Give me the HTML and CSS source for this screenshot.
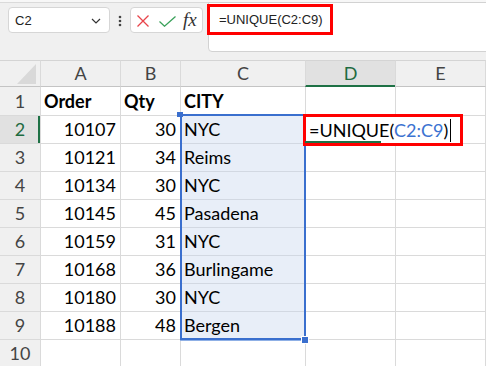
FILE: index.html
```html
<!DOCTYPE html>
<html>
<head>
<meta charset="utf-8">
<link rel="stylesheet" href="styles.css">
</head>
<body>
<div class="app">
  <div class="toolbar">
    <div class="namebox">
      <span>C2</span>
      <svg class="chev" width="10" height="6" viewBox="0 0 10 6"><path d="M1 1 L5 5 L9 1" fill="none" stroke="#333" stroke-width="1.2"/></svg>
    </div>
    <div class="grip">
      <svg width="4" height="12" viewBox="0 0 4 12"><circle cx="2" cy="2" r="1.3" fill="#444"/><circle cx="2" cy="6" r="1.3" fill="#444"/><circle cx="2" cy="10" r="1.3" fill="#444"/></svg>
    </div>
    <div class="fxbox">
      <svg class="ic-x" width="12" height="12" viewBox="0 0 12 12"><path d="M0.5 0.5 L11.5 11.5 M11.5 0.5 L0.5 11.5" stroke="#e8444a" stroke-width="1.3" fill="none"/></svg>
      <svg class="ic-ok" width="17" height="11" viewBox="0 0 17 11"><path d="M0.5 5.5 L5.5 10.2 L16.5 0.5" stroke="#3aa15a" stroke-width="1.3" fill="none"/></svg>
      <span class="fx">fx</span>
    </div>
    <div class="formula">
      <span class="ftext">=UNIQUE(C2:C9)</span>
      <div class="mark mark-bar"></div>
    </div>
  </div>

  <div class="sheet">
    <div class="c hd corner"><div class="tri"></div></div>
    <div class="c hd">A</div>
    <div class="c hd">B</div>
    <div class="c hd">C</div>
    <div class="c hd act-col">D</div>
    <div class="c hd">E</div>
    <div class="c hd"></div>

    <div class="c rh first">1</div>
    <div class="c first b">Order</div>
    <div class="c first b">Qty</div>
    <div class="c first b">CITY</div>
    <div class="c first"></div>
    <div class="c first"></div>
    <div class="c first"></div>

    <div class="c rh act-row">2</div>
    <div class="c n">10107</div>
    <div class="c n">30</div>
    <div class="c sel">NYC</div>
    <div class="c"></div>
    <div class="c"></div>
    <div class="c"></div>

    <div class="c rh">3</div>
    <div class="c n">10121</div>
    <div class="c n">34</div>
    <div class="c sel">Reims</div>
    <div class="c"></div>
    <div class="c"></div>
    <div class="c"></div>

    <div class="c rh">4</div>
    <div class="c n">10134</div>
    <div class="c n">30</div>
    <div class="c sel">NYC</div>
    <div class="c"></div>
    <div class="c"></div>
    <div class="c"></div>

    <div class="c rh">5</div>
    <div class="c n">10145</div>
    <div class="c n">45</div>
    <div class="c sel">Pasadena</div>
    <div class="c"></div>
    <div class="c"></div>
    <div class="c"></div>

    <div class="c rh">6</div>
    <div class="c n">10159</div>
    <div class="c n">31</div>
    <div class="c sel">NYC</div>
    <div class="c"></div>
    <div class="c"></div>
    <div class="c"></div>

    <div class="c rh">7</div>
    <div class="c n">10168</div>
    <div class="c n">36</div>
    <div class="c sel">Burlingame</div>
    <div class="c"></div>
    <div class="c"></div>
    <div class="c"></div>

    <div class="c rh">8</div>
    <div class="c n">10180</div>
    <div class="c n">30</div>
    <div class="c sel">NYC</div>
    <div class="c"></div>
    <div class="c"></div>
    <div class="c"></div>

    <div class="c rh">9</div>
    <div class="c n">10188</div>
    <div class="c n">48</div>
    <div class="c sel">Bergen</div>
    <div class="c"></div>
    <div class="c"></div>
    <div class="c"></div>

    <div class="c rh">10</div>
    <div class="c"></div>
    <div class="c"></div>
    <div class="c"></div>
    <div class="c"></div>
    <div class="c"></div>
    <div class="c"></div>

    <div class="range"></div>
    <div class="handle-tl"></div>
    <div class="handle-br"></div>
    <div class="edit">
      <span class="etext">=UNIQUE(<span class="ref">C2:C9</span>)</span><span class="caret"></span>
      <div class="active-line"></div>
    </div>
  </div>
</div>
</body>
</html>
```

FILE: styles.css
```css
html, body {
  margin: 0;
  padding: 0;
  background: #ffffff;
}

.app {
  width: 486px;
  height: 366px;
  overflow: hidden;
  font-family: "Liberation Sans", Arial, sans-serif;
}

/* ---------- toolbar ---------- */
.toolbar {
  height: 60px;
  display: flex;
  align-items: flex-start;
  background: linear-gradient(#f7f7f7 0 2px, #dadada 2px 3px, #f0f0f0 3px);
}

.namebox {
  margin: 7px 0 0 8px;
  width: 102px;
  height: 26px;
  box-sizing: border-box;
  background: #fff;
  border: 1px solid #d6d6d6;
  border-radius: 4px;
  display: flex;
  align-items: center;
  justify-content: space-between;
  padding: 0 8px 0 6px;
  font-size: 13px;
  color: #222;
}

.chev { margin-top: 1px; }

.grip {
  width: 20px;
  display: flex;
  justify-content: center;
  margin-top: 15px;
}

.fxbox {
  margin-top: 7px;
  width: 73px;
  height: 26px;
  box-sizing: border-box;
  background: #fff;
  border: 1px solid #d6d6d6;
  border-radius: 4px;
  display: flex;
  align-items: center;
  padding-left: 6px;
}

.ic-x { margin-top: 1px; }
.ic-ok { margin-left: 10px; margin-top: 2px; }

.fx {
  margin-left: 7px;
  font-family: "Liberation Serif", "DejaVu Serif", serif;
  font-style: italic;
  font-size: 19px;
  color: #333;
  line-height: 20px;
}

.formula {
  position: relative;
  flex: 1;
  margin: 2px -2px 0 5px;
  height: 50px;
  box-sizing: border-box;
  background: #fff;
  border: 1px solid #d2d2d2;
  border-radius: 0 0 0 4px;
  padding: 9px 0 0 10px;
  font-size: 13px;
  line-height: 16px;
  color: #222;
}

.mark {
  position: absolute;
  border: 3px solid #ff0000;
  box-sizing: border-box;
}

.mark-bar {
  left: -2px;
  top: 1px;
  width: 126px;
  height: 31px;
}

/* ---------- sheet ---------- */
.sheet {
  position: relative;
  display: grid;
  grid-template-columns: 40px 80px 60px 125px 90px 90px 20px;
  grid-template-rows: 27px repeat(10, 28px);
  font-family: "Lato", "Liberation Sans", sans-serif;
  font-size: 18px;
  color: #000;
}

.c {
  box-sizing: border-box;
  border-left: 1px solid #dadada;
  border-top: 1px solid #dadada;
  padding: 0 3px;
  line-height: 27px;
  white-space: nowrap;
  overflow: hidden;
}

.c.first { border-top: none; line-height: 28px; }

.b { font-weight: bold; }
.n { text-align: right; padding-right: 4px; }
.sel { background: #e8eef8; border-top-color: #d2d8e2; }

.hd {
  background: #f0f0f0;
  text-align: center;
  color: #444;
  border-top-color: #d4d4d4;
  border-bottom: 1px solid #c4c4c4;
  line-height: 25px;
}

.corner {
  border-left: none;
  display: flex;
  align-items: flex-end;
  justify-content: flex-end;
  padding: 0 4px 2px 0;
}

.tri {
  width: 19px;
  height: 20px;
  background: #d9d9d9;
  clip-path: polygon(100% 0, 100% 100%, 0 100%);
}

.rh {
  background: #f0f0f0;
  border-left: none;
  text-align: center;
  color: #444;
  padding: 0;
}

.act-col {
  background: #e1e1e1;
  color: #1e6b41;
  border-bottom: 2px solid #1e7145;
  line-height: 24px;
}

.act-row {
  background: #e1e1e1;
  color: #1e6b41;
  box-shadow: inset -2px 0 0 #1e7145;
}

/* selection overlay */
.range {
  position: absolute;
  left: 180px;
  top: 54px;
  width: 126px;
  height: 226px;
  box-sizing: border-box;
  border: 2px solid #3a6fce;
  box-shadow: 0 1px 0 #8fb0e6;
}

.handle-tl {
  position: absolute;
  left: 177px;
  top: 52px;
  width: 6px;
  height: 5px;
  background: #3a6fce;
}

.handle-br {
  position: absolute;
  left: 301px;
  top: 276px;
  width: 6px;
  height: 6px;
  background: #3a6fce;
  border: 1px solid #fff;
}

/* edit cell overlay */
.edit {
  position: absolute;
  left: 303px;
  top: 54px;
  width: 160px;
  height: 32px;
  box-sizing: border-box;
  border: 3px solid #ff0000;
  background: #fff;
  padding-left: 3px;
  display: flex;
  align-items: center;
  font-size: 18px;
}

.etext { color: #000; }
.ref { color: #3b73d1; }

.caret {
  display: inline-block;
  width: 1px;
  height: 23px;
  background: #000;
  margin-left: 2px;
}

.active-line {
  position: absolute;
  left: -1px;
  bottom: 0;
  width: 76px;
  height: 2px;
  background: #1e7145;
}
```
